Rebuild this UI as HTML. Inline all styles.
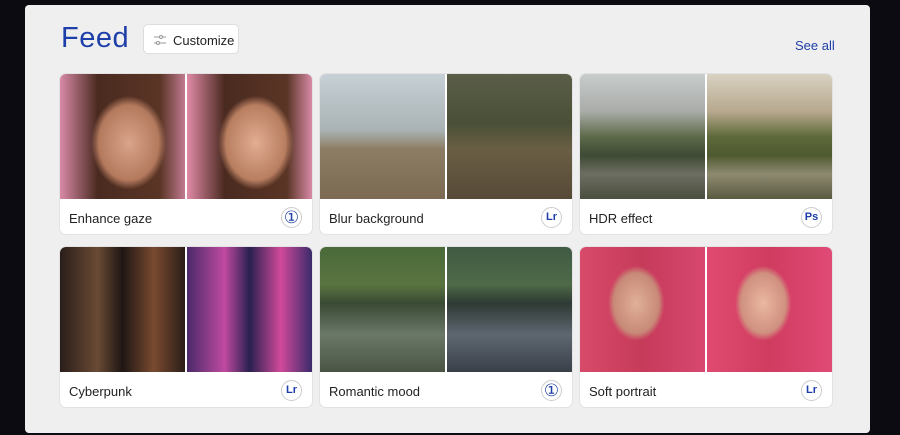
<!DOCTYPE html>
<html><head><meta charset="utf-8"><style>
*{margin:0;padding:0;box-sizing:border-box}
body{width:900px;height:435px;background:#0d0b12;font-family:"Liberation Sans",sans-serif;position:relative;overflow:hidden}
.panel{position:absolute;left:25px;top:5px;width:845px;height:428px;background:#efefef;border-radius:4px}
h1{position:absolute;left:61px;top:22px;font-size:29px;color:#1e3fa8;font-weight:400;letter-spacing:.5px}
.cust{position:absolute;left:143px;top:24px;width:96px;height:30px;background:#fff;border:1px solid #ddd;border-radius:5px;font-size:13px;color:#222;padding:8px 0 0 29px}
.cust svg{position:absolute;left:10px;top:9px}
.see{position:absolute;left:795px;top:38px;font-size:13px;color:#1e3fa8}
.card{position:absolute;width:252px;height:160px;background:#fff;border-radius:6px;overflow:hidden;box-shadow:0 0 0 1px #e2e2e2}
.img{position:absolute;top:0;height:125px;width:125px}
.l{left:0}.r{left:127px}
.lab{position:absolute;left:9px;top:137px;font-size:13px;color:#222}
.badge{position:absolute;right:10px;top:133px;width:21px;height:21px;border-radius:50%;border:1px solid #ccc;font-size:11px;font-weight:700;color:#1e3fa8;text-align:center;line-height:19px}
.badge.o{font-size:17px;font-weight:400;line-height:19px}
</style></head><body>
<div class="panel"></div>
<h1>Feed</h1>
<div class="cust"><svg width="12" height="12" viewBox="0 0 12 12" stroke="#999" fill="none"><line x1="0" y1="3" x2="12" y2="3"/><line x1="0" y1="9" x2="12" y2="9"/><circle cx="7" cy="3" r="1.5" fill="#fff"/><circle cx="4" cy="9" r="1.5" fill="#fff"/></svg>Customize</div>
<div class="see">See all</div>

<div class="card" style="left:60px;top:74px">
<div class="img l" style="background:radial-gradient(ellipse 40% 50% at 55% 55%,#d9a48a,#b47a5e 60%,transparent 75%),linear-gradient(90deg,#d98aa8,#4a2a20 30%,#5a3525 80%,#c07a90)"></div>
<div class="img r" style="background:radial-gradient(ellipse 40% 50% at 55% 55%,#e2ad92,#b87e60 60%,transparent 75%),linear-gradient(90deg,#e08aa6,#4a2a20 30%,#5a3525 80%,#d88aa6)"></div>
<div class="lab">Enhance gaze</div><div class="badge o">①</div></div>

<div class="card" style="left:320px;top:74px">
<div class="img l" style="background:linear-gradient(#c6d0d6,#aab3b4 45%,#8c7d64 60%,#7c6a52)"></div>
<div class="img r" style="background:linear-gradient(#5a5e48,#4a5038 40%,#6a5e44 60%,#574a38)"></div>
<div class="lab">Blur background</div><div class="badge">Lr</div></div>

<div class="card" style="left:580px;top:74px">
<div class="img l" style="background:linear-gradient(#c8cccc,#a9aca8 30%,#5e6a4a 50%,#3e4a34 65%,#6d6e62 80%,#4a4f3e)"></div>
<div class="img r" style="background:linear-gradient(#d8d2c2,#b7a88e 30%,#5e6a3a 50%,#4e5a30 65%,#8e8a70 80%,#5a5a40)"></div>
<div class="lab">HDR effect</div><div class="badge">Ps</div></div>

<div class="card" style="left:60px;top:247px">
<div class="img l" style="background:linear-gradient(90deg,#2a1e1a,#6a4a34 30%,#1e1614 50%,#7a4a30 75%,#2a1e18)"></div>
<div class="img r" style="background:linear-gradient(90deg,#4a2a6a,#c04aa0 30%,#2a2050 50%,#d04a9a 75%,#3a2a6a)"></div>
<div class="lab">Cyberpunk</div><div class="badge">Lr</div></div>

<div class="card" style="left:320px;top:247px">
<div class="img l" style="background:linear-gradient(#4a6a3a,#5a7440 30%,#3a4a34 45%,#6a7868 70%,#4a5444)"></div>
<div class="img r" style="background:linear-gradient(#405a44,#4e6a48 30%,#2e3a34 45%,#5e6670 70%,#3a4048)"></div>
<div class="lab">Romantic mood</div><div class="badge o">①</div></div>

<div class="card" style="left:580px;top:247px">
<div class="img l" style="background:radial-gradient(ellipse 30% 40% at 45% 45%,#e0b098,#c88a78 60%,transparent 75%),linear-gradient(90deg,#d84a6a,#c63a5a 50%,#d84870)"></div>
<div class="img r" style="background:radial-gradient(ellipse 30% 40% at 45% 45%,#eab8a0,#d09080 60%,transparent 75%),linear-gradient(90deg,#e04a70,#d03c60 50%,#e04a76)"></div>
<div class="lab">Soft portrait</div><div class="badge">Lr</div></div>
</body></html>
